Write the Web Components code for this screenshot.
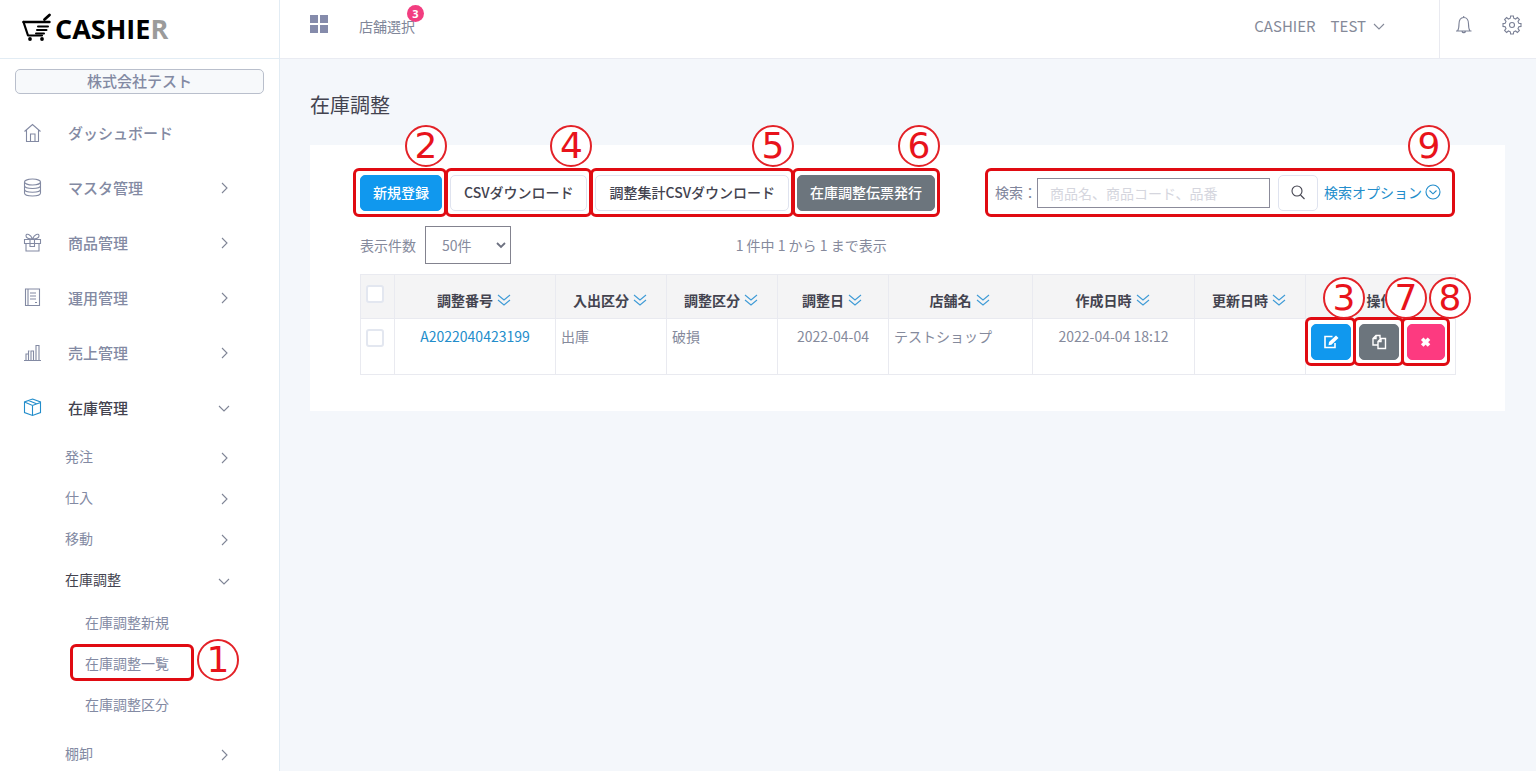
<!DOCTYPE html>
<html lang="ja">
<head>
<meta charset="utf-8">
<meta name="viewport" content="width=device-width, initial-scale=1">
<title>在庫調整 | CASHIER</title>
<style>
  html, body { margin: 0; height: 100%; }
  body {
    font-family: "Noto Sans CJK JP", "Noto Sans", sans-serif;
    font-size: 14px;
    line-height: 20px;
    color: #858a9c;
    --muted: #838aa3;
    --dark: #43434f;
    --blue: #1098ee;
    --link: #238dcb;
    --grey: #6c757d;
    --pink: #fd3a80;
    --line: #e9eaf0;
    --mark: #e00b12;
  }
</style>
</head>
<body>
<cashier-app></cashier-app>

<script>
const ICONS = {
  home: '<path d="M1.500 8.500 9.500 1.500l8 7M3.500 7v11.500h12V7M7.500 18v-7h4.500v7"/>',
  db: '<ellipse cx="9.500" cy="4" rx="8" ry="3"/><path d="M1.500 4v11c0 4 16 4 16 0V4M1.500 7.500c0 4 16 4 16 0M1.500 11.200c0 4 16 4 16 0"/>',
  gift: '<path d="M1.500 6.500h16v4h-16zM3 10.500v7.500h13v-7.500M7 6.500v7h4.500v-7M9.500 6c-2-5-6-6-6.500-3.500C2.700 5 6 6 9.500 6c2-5 6-6 6.500-3.500C16.300 5 13 6 9.500 6z"/>',
  note: '<path d="M2.500 1h14v16.500h-14zM5 1v16.500M7 5h6M7 8h6M7 11h6M12 14.500h2"/>',
  chart: '<path d="M1 17.500h17M3 17V11h2.500v6M5.500 17V8h1M8 17V8h2.500v9M13 17V2.500h3V17"/>',
  box: '<path d="M9.500 1l8 3v10.500l-8 3-8-3V4zM1.500 4l8 3.500 8-3M9.500 7.500v10M5.500 2.500l8 3.200"/>',
  right: '<path d="M8 5l5 5-5 5"/>',
  down: '<path d="M5 8l5 5 5-5"/>',
  thick: '<path d="M6 8l4 4 4-4" stroke-width="1.800"/>',
  sort: '<path d="M5 5l6 5 6-5M5 10l6 5 6-5"/>',
  bell: '<path d="M2 16h15.500M3.500 16c1.500-2 1.500-4 1.500-7 0-4 1.500-6.500 4.700-6.500S14.500 5 14.500 9c0 3 0 5 1.500 7M9.700 2.500V1M8 16.500c.5 1.500 3 1.500 3.500 0"/>',
  gear: '<path d="M8.300 3.200 8.600 1h2.800l.3 2.200 1.900.8L15.400 2.600l2 2L16 6.400l.8 1.900 2.200.3v2.800l-2.200.3-.8 1.900 1.400 1.800-2 2-1.800-1.400-1.900.8-.3 2.200H8.600l-.3-2.200-1.900-.8-1.800 1.400-2-2L4 13.600l-.8-1.900L1 11.400V8.600l2.200-.3L4 6.400 2.600 4.600l2-2L6.400 4z"/><circle cx="10" cy="10" r="2.500"/>',
  grid: '<path d="M1 1h8v8H1zM11 1h8v8h-8zM1 11h8v8H1zM11 11h8v8h-8z" fill="currentColor" stroke="none"/>',
  search: '<circle cx="9" cy="8" r="5"/><path d="M12.500 12l4 4"/>',
  circle: '<circle cx="11" cy="10" r="7"/><path d="M7.500 8.500l3.500 3.300 3.500-3.300"/>',
  edit: '<path d="M14 11v4.500H4v-11h7.500" stroke-width="1.600"/><path d="M7.500 13.200l.5-3.200L15 3.500l2.500 2.500-7 6.700z" fill="currentColor" stroke="none"/>',
  copy: '<path d="M11 6.500V3.500H7L4 6.500v6.500h5M7 3.500v3H4M16.500 6.500H12L9 9.500v7h7.500zM12 6.500v3H9" stroke-width="1.400"/>',
  cross: '<path d="M6.200 6.700l6.800 6.800M13 6.700l-6.800 6.800" stroke-width="3.600"/>'
};

class Base extends HTMLElement {
  connectedCallback() {
    if (this.shadowRoot) return;
    this.attachShadow({ mode: 'open' }).innerHTML = this.render();
  }
}

class AppIcon extends Base {
  render() {
    const n = this.getAttribute('name');
    return `<style>
      :host { display: inline-flex; flex: none; width: var(--size, 20px); height: var(--size, 20px); }
      svg { width: 100%; height: 100%; display: block; }
    </style>
    <svg viewBox="0 0 20 20" fill="none" stroke="currentColor" stroke-width="1.100" aria-hidden="true">${ICONS[n]}</svg>`;
  }
}

/* Red frame with a numbered badge, laid over the slotted control. */
class CallOut extends Base {
  render() {
    return `<style>
      :host { display: inline-flex; position: relative; }
      .frame {
        position: absolute; inset: var(--frame, -7px -5px -6px -5px);
        border: 3px solid var(--mark); border-radius: 6px; pointer-events: none;
      }
      .num {
        position: absolute; z-index: 1; right: var(--badge-right, -3px); top: var(--badge-top, -46px);
        box-sizing: border-box; width: 42px; height: 42px; border: 2px solid #e32228; border-radius: 50%;
        background: #fff; color: #e8131b; text-align: center;
        font: 36px/38px "DejaVu Sans", sans-serif;
      }
    </style>
    <slot></slot><div class="frame"><div class="num">${this.getAttribute('no')}</div></div>`;
  }
}

class NavItem extends Base {
  render() {
    const icon = this.getAttribute('icon');
    const arrow = this.getAttribute('arrow');
    return `<style>
      :host { display: block; color: var(--muted); }
      :host([active]) { color: var(--dark); }
      a {
        display: flex; align-items: center; box-sizing: border-box; height: 55px;
        padding: 0 45px 0 23px; color: inherit; text-decoration: none;
        font-size: 15px; font-weight: 500;
      }
      :host([level="2"]) a { height: 41px; padding-left: 65px; font-size: 14px; font-weight: 400; }
      :host([level="3"]) a { height: 41px; padding-left: 85px; font-size: 14px; font-weight: 400; }
      .label { flex: 1; display: flex; }
      .icon { margin-right: 25px; }
      :host([active]) .icon { color: var(--link); }
      .arrow { color: #7f8596; }
      :host([level="2"]) .arrow { margin-top: 4px; }
    </style>
    <a href="#">${icon ? `<app-icon class="icon" name="${icon}"></app-icon>` : ''}
      <span class="label"><slot></slot></span>
      ${arrow ? `<app-icon class="arrow" name="${arrow}"></app-icon>` : ''}</a>`;
  }
}

class SideBar extends Base {
  render() {
    return `<style>
      :host { display: flex; flex-direction: column; background: #fff; border-right: 1px solid #e2ecf4; min-height: 0; }
      .logo {
        display: flex; align-items: center; gap: 3px; box-sizing: border-box; height: 59px; flex: none;
        padding-left: 22px; border-bottom: 1px solid #e2ecf4;
        color: #000; text-decoration: none; font: 700 27px/32px "Open Sans", sans-serif;
      }
      .logo svg { width: 30px; height: 28px; margin-bottom: 4px; }
      .logo i { font-style: normal; color: #9b9b9b; }
      .company {
        margin: 10px 15px 11px; flex: none; border: 1px solid #b9bfcc; border-radius: 5px; background: #f7f9fb;
        text-align: center; font-size: 15px; line-height: 22px; padding-bottom: 1px; font-weight: 500; color: var(--muted);
      }
      nav { flex: 1; min-height: 0; overflow-y: auto; scrollbar-width: none; }
      .sub { padding: 2px 0 8px; }
      .current { display: flex; }
      .current call-out { --frame: 2px 85px 2px 70px; --badge-right: -48px; --badge-top: -8px; flex: 1; }
      .current nav-item { flex: 1; }
    </style>
    <a class="logo" href="#">
      <svg viewBox="0 0 30 28" fill="none" stroke="#000" stroke-linecap="round" stroke-linejoin="round" aria-hidden="true">
        <path d="M1.500 9h26" stroke-width="2.400"/><path d="M1.500 9l4.500 13.500h14" stroke-width="2.200"/>
        <path d="M22.500 6.500l5-4.500" stroke-width="2.800"/>
        <path d="M16 13.500h10M15 17h9.500M14 20.500h8" stroke-width="2"/>
        <circle cx="8" cy="26" r="1.900" fill="#000" stroke="none"/><circle cx="20" cy="26" r="1.900" fill="#000" stroke="none"/>
      </svg><span>CASHIE<i>R</i></span></a>
    <div class="company">株式会社テスト</div>
    <nav>
      <nav-item icon="home">ダッシュボード</nav-item>
      <nav-item icon="db" arrow="right">マスタ管理</nav-item>
      <nav-item icon="gift" arrow="right">商品管理</nav-item>
      <nav-item icon="note" arrow="right">運用管理</nav-item>
      <nav-item icon="chart" arrow="right">売上管理</nav-item>
      <nav-item icon="box" arrow="down" active>在庫管理</nav-item>
      <nav-item level="2" arrow="right">発注</nav-item>
      <nav-item level="2" arrow="right">仕入</nav-item>
      <nav-item level="2" arrow="right">移動</nav-item>
      <nav-item level="2" arrow="down" active>在庫調整</nav-item>
      <div class="sub">
        <nav-item level="3">在庫調整新規</nav-item>
        <div class="current"><call-out no="1"><nav-item level="3">在庫調整一覧</nav-item></call-out></div>
        <nav-item level="3">在庫調整区分</nav-item>
      </div>
      <nav-item level="2" arrow="right">棚卸</nav-item>
    </nav>`;
  }
}

class TopBar extends Base {
  render() {
    return `<style>
      :host { display: flex; align-items: stretch; box-sizing: border-box; height: 59px; background: #fff; border-bottom: 1px solid #e9ebf2; padding-left: 29px; }
      button { border: 0; padding: 0; background: none; color: inherit; font: inherit; display: flex; align-items: center; cursor: pointer; }
      .left { display: flex; align-items: center; gap: 30px; flex: 1; padding-bottom: 10px; }
      .left button { color: #858bab; }
      .shop { position: relative; color: #808699; text-decoration: none; padding-top: 4px; }
      .badge {
        position: absolute; top: -7px; right: -9px; width: 17px; height: 17px; border-radius: 50%;
        background: #f23d80; color: #fff; text-align: center; font: 700 11px/17px "Noto Sans", sans-serif;
      }
      .user { font-size: 15px; gap: 3px; padding: 0 50px 6px 0; color: #858a99; }
      .tools { display: flex; align-items: center; gap: 28px; border-left: 1px solid var(--line); padding: 0 14px 9px; color: #7b8196; }
    </style>
    <div class="left">
      <button aria-label="メニュー"><app-icon name="grid"></app-icon></button>
      <a class="shop" href="#">店舗選択<span class="badge">3</span></a>
    </div>
    <button class="user">CASHIER　TEST<app-icon name="down"></app-icon></button>
    <div class="tools">
      <button aria-label="通知"><app-icon name="bell"></app-icon></button>
      <button aria-label="設定"><app-icon name="gear"></app-icon></button>
    </div>`;
  }
}

class AppButton extends Base {
  render() {
    const label = this.getAttribute('label');
    return `<style>
      :host { display: inline-flex; }
      button {
        box-sizing: border-box; height: 36px; padding: 0 13px 2px; border: 1px solid #dfe3ef; border-radius: 5px;
        background: #fff; color: var(--dark); font: 500 14px/20px "Noto Sans CJK JP", sans-serif;
        display: flex; align-items: center; justify-content: center; white-space: nowrap; cursor: pointer;
      }
      :host([kind]) button { padding: 0 12px 2px; color: #fff; }
      :host([kind="blue"]) button { background: var(--blue); border-color: var(--blue); }
      :host([kind="grey"]) button { background: var(--grey); border-color: var(--grey); }
      :host([kind="pink"]) button { background: var(--pink); border-color: var(--pink); }
      :host([icon]) button { width: 40px; padding: 0; }
      :host([icon][kind="pink"]) button { width: 38px; }
    </style>
    <button${label ? ` aria-label="${label}"` : ''}><slot></slot></button>`;
  }
}

class SearchBox extends Base {
  render() {
    return `<style>
      :host { display: flex; align-items: center; height: 36px; padding-right: 13px; }
      label { color: #7f859b; padding-bottom: 2px; }
      input {
        box-sizing: border-box; width: 233px; height: 30px; padding: 0 12px; margin-right: 8px;
        border: 1px solid #8b8b9a; border-radius: 0; font: inherit; color: var(--dark); background: #fff;
      }
      input::placeholder { color: #d5d6de; opacity: 1; }
      a { display: flex; align-items: center; margin-left: 6px; padding-bottom: 2px; color: var(--link); text-decoration: none; white-space: nowrap; }
    </style>
    <label for="q">検索：</label><input id="q" type="text" placeholder="商品名、商品コード、品番">
    <app-button icon label="検索"><app-icon name="search"></app-icon></app-button>
    <a href="#">検索オプション<app-icon name="circle"></app-icon></a>`;
  }
}

class StockTable extends Base {
  render() {
    const heads = ['調整番号', '入出区分', '調整区分', '調整日', '店舗名', '作成日時', '更新日時'];
    const widths = [34, 161, 111, 111, 111, 144, 162, 111, 150];
    return `<style>
      :host { display: block; }
      table { width: 100%; table-layout: fixed; border-collapse: collapse; }
      th, td { border: 1px solid var(--line); vertical-align: top; }
      th { background: #f4f4f5; color: var(--dark); font-weight: 700; text-align: center; padding: 15px 0 8px; height: 20px; white-space: nowrap; }
      td { padding: 7px 5px 8px; height: 40px; }
      .mid { text-align: center; }
      .pick { padding: 10px 0 0 5px; text-align: left; line-height: 0; }
      input { appearance: none; margin: 0; width: 18px; height: 18px; border: 2px solid #e3e7f0; border-radius: 3px; background: #fff; }
      .head { display: inline-flex; align-items: center; justify-content: center; }
      .head app-icon { color: #3f9bd6; }
      a { color: var(--link); text-decoration: none; }
      .acts { padding: 5px; }
      .acts div { display: flex; gap: 8px; }
      call-out { --frame: -7px -5px -6px -6px; --badge-top: -43px; --badge-right: -12px; }
      call-out[no="7"] { --badge-right: -26px; }
      call-out[no="8"] { --badge-right: -24px; }
    </style>
    <table>
      <colgroup>${widths.map(w => `<col style="width:${w}px">`).join('')}</colgroup>
      <thead><tr>
        <th class="pick"><input type="checkbox" aria-label="すべて選択"></th>
        ${heads.map(h => `<th><span class="head">${h}<app-icon name="sort"></app-icon></span></th>`).join('')}
        <th>操作</th>
      </tr></thead>
      <tbody><tr>
        <td class="pick"><input type="checkbox" aria-label="A2022040423199を選択"></td>
        <td class="mid"><a href="#">A2022040423199</a></td>
        <td>出庫</td>
        <td>破損</td>
        <td class="mid">2022-04-04</td>
        <td>テストショップ</td>
        <td class="mid">2022-04-04 18:12</td>
        <td></td>
        <td class="acts"><div>
          <call-out no="3"><app-button icon kind="blue" label="編集"><app-icon name="edit"></app-icon></app-button></call-out>
          <call-out no="7"><app-button icon kind="grey" label="複製"><app-icon name="copy"></app-icon></app-button></call-out>
          <call-out no="8"><app-button icon kind="pink" label="削除"><app-icon name="cross"></app-icon></app-button></call-out>
        </div></td>
      </tr></tbody>
    </table>`;
  }
}

class StockPage extends Base {
  render() {
    return `<style>
      :host { display: block; padding: 31px 31px 30px 30px; }
      h1 { margin: 0 0 25px; font-size: 20px; line-height: 30px; font-weight: 400; color: var(--dark); }
      .card { background: #fff; padding: 30px 50px 36px; }
      .bar { display: flex; justify-content: space-between; align-items: center; margin-bottom: 15px; }
      .buttons { display: flex; gap: 8px; }
      .buttons call-out:first-child { --frame: -7px -5px -6px -7px; }
      .find { --frame: -7px 0 -6px -10px; --badge-right: 2px; }
      .info { display: grid; grid-template-columns: 1fr 2fr; gap: 16px; align-items: center; margin-bottom: 10px; }
      .count { display: flex; align-items: center; gap: 9px; }
      .pick { position: relative; display: flex; align-items: center; }
      select {
        appearance: none; box-sizing: border-box; width: 86px; height: 38px; padding: 0 16px; border: 1px solid #83838f;
        border-radius: 0; background: #fff; color: #868b9d; font: inherit;
      }
      .pick app-icon { position: absolute; right: 0; pointer-events: none; color: #6d7180; }
      p { margin: 0; }
    </style>
    <h1>在庫調整</h1>
    <section class="card">
      <div class="bar">
        <div class="buttons">
          <call-out no="2"><app-button kind="blue">新規登録</app-button></call-out>
          <call-out no="4"><app-button>CSVダウンロード</app-button></call-out>
          <call-out no="5"><app-button>調整集計CSVダウンロード</app-button></call-out>
          <call-out no="6"><app-button kind="grey">在庫調整伝票発行</app-button></call-out>
        </div>
        <call-out class="find" no="9"><search-box></search-box></call-out>
      </div>
      <div class="info">
        <div class="count"><label for="n">表示件数</label>
          <span class="pick"><select id="n"><option>50件</option><option>100件</option></select><app-icon name="thick"></app-icon></span></div>
        <p>1 件中 1 から 1 まで表示</p>
      </div>
      <stock-table></stock-table>
    </section>`;
  }
}

class CashierApp extends Base {
  render() {
    return `<style>
      :host { display: grid; grid-template-columns: 280px 1fr; height: 100vh; background: #f4f7fb; }
      main { min-width: 0; overflow: auto; }
    </style>
    <side-bar></side-bar>
    <main><top-bar></top-bar><stock-page></stock-page></main>`;
  }
}

customElements.define('app-icon', AppIcon);
customElements.define('call-out', CallOut);
customElements.define('nav-item', NavItem);
customElements.define('side-bar', SideBar);
customElements.define('top-bar', TopBar);
customElements.define('app-button', AppButton);
customElements.define('search-box', SearchBox);
customElements.define('stock-table', StockTable);
customElements.define('stock-page', StockPage);
customElements.define('cashier-app', CashierApp);
</script>
</body>
</html>
